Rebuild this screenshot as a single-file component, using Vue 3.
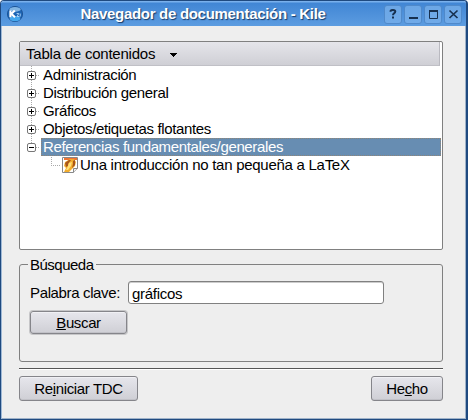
<script setup>
import { ref } from 'vue'

const items = ['Administración', 'Distribución general', 'Gráficos', 'Objetos/etiquetas flotantes']
const keyword = ref('gráficos')
</script>

<template>
  <div class="window">
    <header class="titlebar">
      <svg class="logo" width="16" height="16" viewBox="0 0 16 16">
        <circle cx="8" cy="8" r="7.6" fill="#1f66b4" stroke="#174b8c" stroke-width=".8" />
        <ellipse cx="8" cy="12.6" rx="5.2" ry="2.6" fill="#45a8ee" />
        <ellipse cx="8" cy="3.4" rx="5.6" ry="2.4" fill="#82b5e2" />
        <path d="M3.4 4.4V11.2M7.8 4.4L4.4 7.8L8 11.2" fill="none" stroke="#fff" stroke-width="2.1" />
        <path d="M9.6 7.5h2.2l-1.8 3h2.4M13.2 7.5v3" fill="none" stroke="#a5cef2" stroke-width="1" />
      </svg>
      <h1 class="title">Navegador de documentación - Kile</h1>
      <div class="controls">
        <button class="ctl"><svg width="16" height="16" viewBox="0 0 16 16"><path d="M5.6 5.8V4.8Q6 3.9 8 3.9Q10.3 3.9 10.3 5.6Q10.3 6.6 9 7.3Q8 7.9 8 9.2M8 10.4v2" /></svg></button>
        <button class="ctl"><svg width="16" height="16" viewBox="0 0 16 16"><path d="M4 12h9" /></svg></button>
        <button class="ctl"><svg width="16" height="16" viewBox="0 0 16 16"><path d="M4 5h9" /><path class="thin" d="M4.5 4v8.5h8V4" /></svg></button>
        <button class="ctl"><svg width="16" height="16" viewBox="0 0 16 16"><path class="cross" d="M4.5 4.5l8 7.5M12.5 4.5l-8 7.5" /></svg></button>
      </div>
    </header>

    <main class="body">
      <section class="tree">
        <div class="head">
          <span>Tabla de contenidos</span>
          <svg width="7" height="4" viewBox="0 0 7 4" shape-rendering="crispEdges"><path d="M0 0h7v1H0zM1 1h5v1H1zM2 2h3v1H2zM3 3h1v1H3z" /></svg>
        </div>
        <div v-for="item in items" :key="item" class="row">
          <svg class="node" width="21" height="18" viewBox="0 0 21 18">
            <path class="dots" d="M11.5 0v18M16 9.5h4" />
            <rect x="7.5" y="5.5" width="8" height="8" rx="1.5" fill="#fff" stroke="#777" />
            <path d="M9 9.5h5M11.5 7v5" stroke="#000" />
          </svg>
          <span class="label">{{ item }}</span>
        </div>
        <div class="row selected">
          <svg class="node" width="21" height="18" viewBox="0 0 21 18">
            <path class="dots" d="M11.5 0v5M16 9.5h4" />
            <rect x="7.5" y="5.5" width="8" height="8" rx="1.5" fill="#fff" stroke="#777" />
            <path d="M9 9.5h5" stroke="#000" />
          </svg>
          <span class="label">Referencias fundamentales/generales</span>
        </div>
        <div class="row">
          <svg class="leaf" width="58" height="18" viewBox="0 0 58 18">
            <path class="dots" d="M31.5 1v9M33 9.5h8" />
            <path d="M42.5 1.5h15v11l-4 4h-11z" fill="#fff" stroke="#888" />
            <path d="M44 2h13v2H44z" fill="#ee7434" />
            <path d="M45 6l5-3 4 0 2 3-1 4-2 2-4 4h-5l2-4-2-2z" fill="#f2ad2d" />
            <path d="M45 7l4-3h2l-3 4v2l-2 1zM53 5l2-1v5l-3 3 1-4z" fill="#a8561c" />
            <path d="M49 7l3-1-1 4-3 4h-2l2-4z" fill="#ffe17a" />
            <path d="M53.5 16.5v-4h4" fill="#eee" stroke="#888" />
          </svg>
          <span class="label doc">Una introducción no tan pequeña a LaTeX</span>
        </div>
      </section>

      <fieldset class="search">
        <legend>Búsqueda</legend>
        <div class="field">
          <label for="keyword">Palabra clave:</label>
          <input id="keyword" v-model="keyword" type="text" />
        </div>
        <button class="push find"><span><u>B</u>uscar</span></button>
      </fieldset>

      <hr class="rule" />

      <footer class="actions">
        <button class="push reset"><span>Re<u>i</u>niciar TDC</span></button>
        <button class="push done"><span>He<u>c</u>ho</span></button>
      </footer>
    </main>
  </div>
</template>

<style>
body { background: #fff; overflow: hidden; }
</style>

<style scoped>
* { box-sizing: border-box; }
.window {
  width: 468px;
  height: 420px;
  border: 1px solid #1f4a80;
  border-right-width: 2px;
  border-radius: 4px 4px 0 0;
  background: #eee;
  box-shadow: inset 1px 0 #9fb9d6, inset -1px -1px #9fb2c8;
  overflow: hidden;
  font-family: "Liberation Sans", Arial, sans-serif;
  font-size: 15px;
  letter-spacing: -0.36px;
  color: #000;
}
.titlebar {
  display: flex;
  align-items: center;
  height: 25px;
  padding: 1px 4px 0 6px;
  background: linear-gradient(#79b0ec 0, #79b0ec 1px, #4186d5 2px, #5c9ce0 100%);
}
.logo { flex: none; margin-top: -1px; }
.title {
  flex: 1;
  margin: 0;
  padding-right: 1px;
  text-align: center;
  font-size: 15px;
  letter-spacing: -0.3px;
  line-height: 24px;
  font-weight: bold;
  color: #fff;
  text-shadow: 1px 1px 1px #173a66;
  white-space: nowrap;
}
.controls { display: flex; gap: 2px; }
.ctl {
  width: 18px;
  height: 19px;
  padding: 0;
  border: 1px solid #4f89ca;
  border-radius: 3px;
  background: linear-gradient(#6ca7e6, #70aae8);
}
.ctl svg { display: block; fill: none; stroke: #17304f; stroke-width: 2; }
.ctl .thin { stroke-width: 1; }
.ctl .cross { stroke-width: 1.7; }
.body { padding: 15px 23px 0 18px; }
.tree {
  height: 209px;
  border: 1px solid #808080;
  border-radius: 2px;
  background: #fff;
}
.head {
  display: flex;
  align-items: center;
  gap: 15px;
  height: 24px;
  margin-right: 2px;
  padding-left: 6px;
  border-right: 1px solid #b9b9c0;
  border-bottom: 1px solid #c0c0c6;
  background: linear-gradient(#e5e5ea, #cfcfd5);
  letter-spacing: -0.22px;
}
.head svg { margin-top: 3px; }
.row { display: flex; height: 18px; line-height: 18px; white-space: nowrap; }
.node, .leaf { flex: none; }
.dots { fill: none; stroke: #aaa; stroke-dasharray: 1 1; }
.label { padding-left: 2px; }
.doc { letter-spacing: -0.27px; }
.selected .label {
  flex: 1;
  margin-right: 1px;
  padding-left: 1px;
  border: 1px dotted #8f8578;
  background: #678db2;
  color: #fff;
  line-height: 16px;
}
.search {
  height: 106px;
  margin: 6px 0 0;
  padding: 8px 9px 0;
  border: 1px solid #808080;
  border-radius: 3px;
}
legend { height: 17px; margin-left: -1px; padding: 0 2px; line-height: 17px; letter-spacing: -0.5px; }
.field { display: flex; align-items: center; height: 23px; padding-left: 1px; }
.field label { width: 98px; }
.field input {
  width: 256px;
  height: 23px;
  margin: 0;
  padding: 2px 3px 0;
  border: 1px solid #808080;
  border-radius: 3px;
  outline: 0;
  background: #fff;
  box-shadow: inset 0 1px #ccc;
  font: inherit;
  letter-spacing: -0.28px;
}
.push {
  display: block;
  height: 25px;
  padding: 0;
  border: 1px solid #85858a;
  border-radius: 3px;
  background: linear-gradient(#e6e6ec, #cfcfd5);
  box-shadow: inset 0 -1px #c1c1c7, inset 0 1px #f0f0f4;
  font: inherit;
  letter-spacing: inherit;
  color: #000;
}
.push u { text-decoration-thickness: 1px; text-underline-offset: 1px; text-decoration-skip-ink: none; }
.find {
  width: 97px;
  height: 23px;
  margin: 7px 0 0 1px;
  line-height: 19px;
  box-shadow: inset 0 -1px #c1c1c7, inset 0 1px #f0f0f4, 0 0 0 1px #c6c6c8;
}
.rule { height: 2px; margin: 6px 0 0; border: 0; border-top: 1px solid #555; background: #fff; }
.actions { display: flex; justify-content: space-between; padding-top: 6px; }
.reset { width: 119px; }
.done { width: 72px; }
</style>
